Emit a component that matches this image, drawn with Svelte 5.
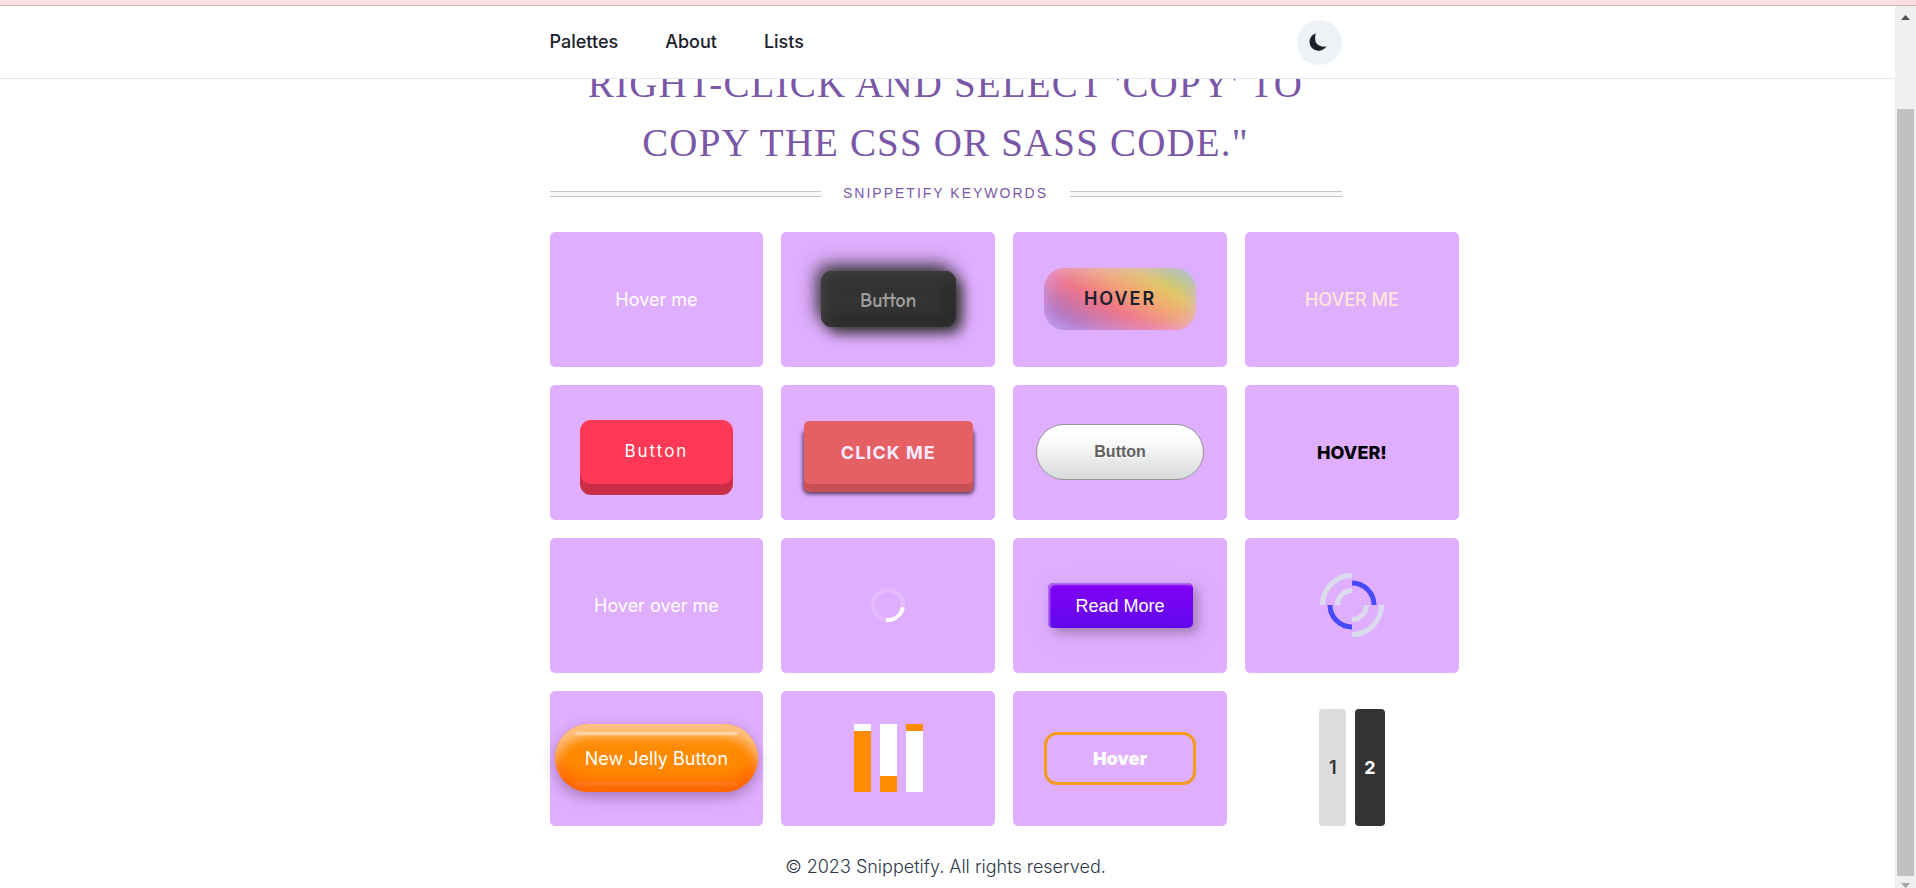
<script>
  const nav = ['Palettes', 'About', 'Lists'];
</script>

<div class="page">
  <div class="topbar"></div>
  <div class="viewport">
    <div class="content">
      <header>
        <div class="wrap bar">
          <nav>
            {#each nav as item}
              <a href="#{item.toLowerCase()}">{item}</a>
            {/each}
          </nav>
          <button class="theme" aria-label="Toggle dark mode">
            <svg viewBox="0 0 18 18" width="18" height="18" aria-hidden="true">
              <path d="M6.9 0.2 A9 9 0 1 0 17.4 13.2 C13 14.6 6.6 12.6 6.2 6.6 C6 4 6.2 1.8 6.9 0.2 Z" fill="#1a202c" />
            </svg>
          </button>
        </div>
      </header>

      <main>
        <div class="wrap">
          <h1>Right-click and select 'Copy' to copy the CSS or SASS code."</h1>
          <div class="divider">
            <span class="rule"></span>
            <h2>Snippetify keywords</h2>
            <span class="rule"></span>
          </div>

          <section class="grid">
            <div class="card"><button class="plain">Hover me</button></div>
            <div class="card"><button class="dark">Button</button></div>
            <div class="card"><button class="rainbow">HOVER</button></div>
            <div class="card"><button class="plain cream">HOVER ME</button></div>

            <div class="card"><button class="red">Button</button></div>
            <div class="card"><button class="click">CLICK ME</button></div>
            <div class="card"><button class="silver">Button</button></div>
            <div class="card"><button class="plain black">HOVER!</button></div>

            <div class="card"><button class="plain">Hover over me</button></div>
            <div class="card"><div class="spinner"></div></div>
            <div class="card"><button class="read">Read More</button></div>
            <div class="card">
              <svg width="64" height="64" viewBox="-32 -32 64 64" fill="none" stroke-width="5" aria-hidden="true">
                <path d="M-29.5 0 A29.5 29.5 0 0 1 0 -29.5 M29.5 0 A29.5 29.5 0 0 1 0 29.5" stroke="#dadcee" />
                <path d="M0 -22 A22 22 0 0 1 22 0 M0 22 A22 22 0 0 1 -22 0" stroke="#474bff" />
                <path d="M-14.5 0 A14.5 14.5 0 0 1 0 -14.5 M14.5 0 A14.5 14.5 0 0 1 0 14.5" stroke="#dadcee" />
              </svg>
            </div>

            <div class="card"><button class="jelly">New Jelly Button</button></div>
            <div class="card">
              <div class="bars"><i class="b1"></i><i class="b2"></i><i class="b3"></i></div>
            </div>
            <div class="card"><button class="outline">Hover</button></div>
            <div class="pager">
              <button class="page-btn">1</button>
              <button class="page-btn current">2</button>
            </div>
          </section>

          <footer>© 2023 Snippetify. All rights reserved.</footer>
        </div>
      </main>
    </div>

    <div class="scrollbar" aria-hidden="true">
      <svg width="9" height="5" viewBox="0 0 9 5"><path d="M4.5 0 L9 5 H0 Z" fill="#505050" /></svg>
      <div class="thumb"></div>
      <svg width="9" height="5" viewBox="0 0 9 5"><path d="M0 0 H9 L4.5 5 Z" fill="#a3a3a3" /></svg>
    </div>
  </div>
</div>

<style>
  :global(body) {
    margin: 0;
    background: #fff;
    font-family: Inter, "Liberation Sans", sans-serif;
    font-optical-sizing: none;
    font-size: 18px;
    color: #1a202c;
  }
  .page {
    height: 100vh;
    display: flex;
    flex-direction: column;
    overflow: hidden;
  }
  .topbar {
    flex: none;
    height: 5px;
    background: #ffdee3;
    border-bottom: 1px solid #cbadb8;
  }
  .viewport {
    flex: 1;
    min-height: 0;
    display: flex;
  }
  .content {
    flex: 1;
    min-width: 0;
    overflow: hidden;
  }
  .wrap {
    box-sizing: border-box;
    max-width: 840px;
    margin: 0 auto;
    padding: 0 24px;
  }
  header,
  main {
    padding-right: 4px;
  }
  header {
    position: relative;
    z-index: 2;
    background: #fff;
    border-bottom: 1px solid #dfe7ef;
  }
  .bar {
    height: 72px;
    display: flex;
    align-items: center;
    justify-content: space-between;
  }
  nav {
    display: flex;
    gap: 47px;
    padding-bottom: 2px;
  }
  nav a {
    color: #1a202c;
    font-weight: 500;
    text-decoration: none;
  }
  button {
    font: inherit;
    border: 0;
    padding: 0;
    margin: 0;
    background: none;
    color: inherit;
    cursor: pointer;
  }
  .theme {
    width: 45px;
    height: 45px;
    border-radius: 50%;
    background: #edf2f7;
    display: flex;
    align-items: center;
    justify-content: center;
    padding-right: 2px;
  }
  h1 {
    margin: -25px 0 11px;
    font: 400 39px/59px "Liberation Serif", "Times New Roman", serif;
    letter-spacing: 0.03em;
    text-align: center;
    text-transform: uppercase;
    color: #7a57a6;
  }
  .divider {
    display: grid;
    grid-template-columns: 1fr auto 1fr;
    align-items: center;
    column-gap: 22px;
    margin-bottom: 29px;
  }
  .rule {
    height: 4px;
    margin-top: 2px;
    border-top: 1px solid #c6c6c6;
    border-bottom: 1px solid #c6c6c6;
    background: #f8f8f8;
  }
  h2 {
    margin: 0;
    font: 400 14px/20px "Liberation Sans", Arial, sans-serif;
    letter-spacing: 2px;
    text-transform: uppercase;
    color: #7a57a6;
  }
  .grid {
    display: grid;
    grid-template-columns: repeat(4, 27%);
    grid-auto-rows: 135px;
    gap: 18px;
  }
  .card {
    display: flex;
    align-items: center;
    justify-content: center;
    padding-bottom: 1px;
    box-sizing: border-box;
    background: #e0aeff;
    border-radius: 5px;
  }
  .plain { color: #fff; }
  .cream { color: #ffe7d6; font-weight: 500; }
  .black { color: #000; font-weight: 800; }
  .dark {
    width: 135px;
    height: 56px;
    border-radius: 11px;
    background: #333;
    color: #a0a0a0;
    font-family: "Comic Sans MS", "Comic Neue", "Open Sans", sans-serif;
    font-size: 20px;
    font-weight: 700;
    padding-top: 2px;
    box-shadow: inset 2px 2px 14px #464646, inset -6px -6px 14px #222, 6px 6px 14px #333, -4px -6px 18px #333;
  }
  .rainbow {
    width: 152px;
    height: 62px;
    border-radius: 21px;
    background: linear-gradient(30deg, #9a92f0 0%, #b274bd 17%, #ef7688 41%, #f2a872 60%, #e2c864 75%, #b4cc80 87%, #90c8d0 100%);
    box-shadow: inset 0 0 22px rgba(224, 174, 255, 0.7);
    font-weight: 600;
    letter-spacing: 2px;
    padding-bottom: 2px;
  }
  .red {
    width: 153px;
    height: 64px;
    border-radius: 11px;
    background: #ff3855;
    color: #fff;
    font-size: 17px;
    letter-spacing: 2px;
    padding-bottom: 2px;
    box-shadow: 0 11px 0 #ca2e44;
  }
  .click {
    width: 169px;
    height: 63px;
    border-radius: 5px;
    background: #e56062;
    color: #f8eaff;
    font-weight: 700;
    letter-spacing: 1px;
    box-shadow: 0 8px 0 #c65054, 0 9px 4px 1px #4a3050;
  }
  .silver {
    width: 168px;
    height: 56px;
    border: 1px solid #949494;
    border-radius: 28px;
    background: linear-gradient(#fff 20%, #d8dadb);
    color: #606060;
    font: 700 16px "Liberation Sans", Arial, sans-serif;
    text-shadow: 0 1px 0 #fff;
  }
  .spinner {
    box-sizing: border-box;
    width: 34px;
    height: 34px;
    border: 4px solid #e6baff;
    border-right-color: #fff;
    border-radius: 50%;
    transform: rotate(53deg);
  }
  .read {
    width: 145px;
    height: 45px;
    border-radius: 5px;
    background: linear-gradient(#8400f5, #5f0aec);
    color: #fff;
    font-family: "Liberation Sans", Arial, sans-serif;
    padding-top: 2px;
    box-shadow: inset 2px 2px 2px #b46cf4, 5px 5px 10px rgba(80, 60, 80, 0.35), 5px 8px 28px rgba(80, 60, 80, 0.1);
  }
  .jelly {
    position: relative;
    width: 203px;
    height: 68px;
    border-radius: 34px;
    background: #ff8a00;
    color: #fff;
    box-shadow: inset 0 14px 12px -2px #ffc285, inset 0 -14px 14px -2px #ff6500, 0 5px 14px rgba(80, 40, 80, 0.4);
  }
  .jelly::before,
  .jelly::after {
    content: "";
    position: absolute;
    left: 20px;
    right: 20px;
    height: 3px;
    border-radius: 2px;
    filter: blur(1px);
  }
  .jelly::before {
    top: 8px;
    background: #ffdcb8;
  }
  .jelly::after {
    bottom: 7px;
    background: #ff7c26;
  }
  .bars {
    display: flex;
    gap: 9px;
    height: 68px;
  }
  .bars i {
    width: 17px;
    background: #fff;
  }
  .bars .b1 { background: linear-gradient(#fff 7px, #ff8c00 7px); }
  .bars .b2 { background: linear-gradient(#fff 52px, #ff8c00 52px); }
  .bars .b3 { background: linear-gradient(#ff8c00 7px, #fff 7px); }
  .outline {
    width: 152px;
    height: 53px;
    border: 3px solid #f59b1c;
    border-radius: 13px;
    color: #fff;
    font-weight: 900;
  }
  .pager {
    display: flex;
    justify-content: center;
    gap: 9px;
    padding-top: 18px;
  }
  .page-btn {
    min-width: 27px;
    padding: 0 9px;
    border-radius: 4px;
    background: #ddd;
    color: #333;
    font-weight: 600;
  }
  .current {
    background: #333;
    color: #fff;
    font-weight: 700;
  }
  footer {
    margin-top: 27px;
    font-weight: 300;
    line-height: 27px;
    text-align: center;
    color: #2d3748;
  }
  .scrollbar {
    flex: none;
    width: 21px;
    background: #f0f0f0;
    display: flex;
    flex-direction: column;
    align-items: center;
    padding-top: 9px;
    box-sizing: border-box;
  }
  .scrollbar svg { flex: none; }
  .thumb {
    flex: 1;
    width: 17px;
    margin: 89px 0 7px;
    background: #c1c1c1;
  }
</style>
